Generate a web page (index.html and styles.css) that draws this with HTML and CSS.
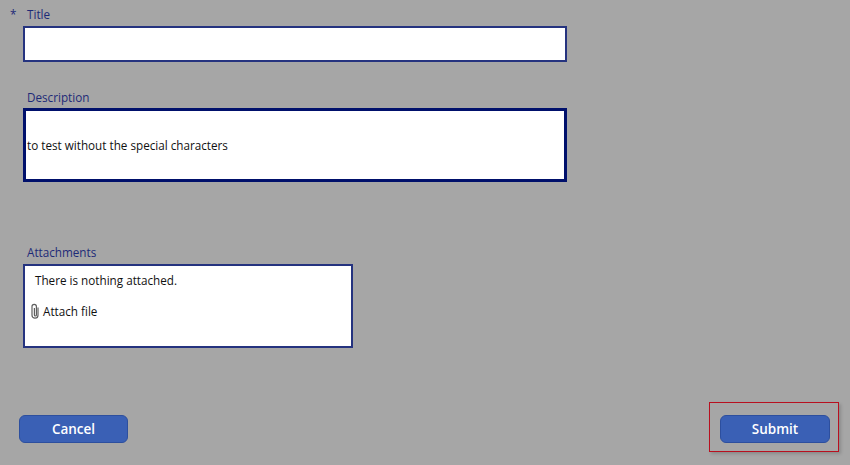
FILE: index.html
```html
<!DOCTYPE html>
<html lang="en">
<head>
<meta charset="utf-8">
<title>Form</title>
<link rel="stylesheet" href="styles.css">
</head>
<body>
<main class="form">
  <section class="field field-title">
    <div class="label-row"><span class="required">*</span><label class="label" for="title">Title</label></div>
    <div class="input input-title" id="title"></div>
  </section>
  <section class="field field-description">
    <div class="label-row"><label class="label">Description</label></div>
    <div class="input input-description">to test without the special characters</div>
  </section>
  <section class="field field-attachments">
    <div class="label-row"><label class="label">Attachments</label></div>
    <div class="input input-attachments">
      <p class="empty">There is nothing attached.</p>
      <div class="attach">
        <svg class="clip" width="10" height="16" viewBox="0 0 10 16" aria-hidden="true"><path d="M8 4.500v7.700a3 3 0 0 1-6 0V3.600a2.200 2.200 0 0 1 4.400 0v8.400a1 1 0 0 1-2 0V5" fill="none" stroke="#5f5f5f" stroke-width="1.200"/></svg>
        <span>Attach file</span>
      </div>
    </div>
  </section>
  <footer class="actions">
    <button class="btn btn-cancel" type="button">Cancel</button>
    <div class="highlight"><button class="btn" type="button">Submit</button></div>
  </footer>
</main>
</body>
</html>
```
FILE: styles.css
```css
* { box-sizing: border-box; }
html, body { margin: 0; height: 100%; }
body {
  background: #a6a6a6;
  font-family: "Open Sans", "Liberation Sans", sans-serif;
  font-size: 11.7px;
  color: #111;
  overflow: hidden;
}
.form {
  display: flex;
  flex-direction: column;
  width: 850px;
  height: 465px;
  padding: 7px 0 0 23px;
}
.label-row {
  position: relative;
  height: 19px;
  padding-left: 4px;
  line-height: 14px;
}
.label { color: #1d2a78; }
.required {
  position: absolute;
  left: -13px;
  top: 0;
  color: #1d2a78;
}
.input {
  background: #fff;
  border: 2px solid #25337f;
}
.input-title { width: 544px; height: 36px; }
.field-description { margin-top: 27px; padding-top: 1px; }
.field-description .label-row { height: 18px; }
.input-description {
  display: flex;
  align-items: center;
  width: 544px;
  height: 74px;
  padding-left: 1px;
  border: 3px solid #00106b;
}
.field-attachments { margin-top: 63px; }
.input-attachments {
  width: 330px;
  height: 84px;
  padding: 5px 0 0 10px;
}
.empty { margin: 0; line-height: 18px; }
.attach {
  display: flex;
  align-items: center;
  gap: 3px;
  margin: 13px 0 0 -5px;
  line-height: 18px;
}
.clip { flex: none; }
.actions {
  display: flex;
  justify-content: space-between;
  align-items: center;
  position: relative;
  width: 811px;
  height: 28px;
  margin: 67px 0 0 -4px;
}
.btn {
  width: 110px;
  height: 28px;
  padding: 0;
  background: #3a60b5;
  border: 1px solid #2d4f9e;
  border-radius: 6px;
  color: #fff;
  font: 600 13.5px "Open Sans", "Liberation Sans", sans-serif;
}
.btn-cancel { width: 109px; }
.highlight { position: relative; }
.highlight::after {
  content: "";
  position: absolute;
  left: -11px;
  top: -13px;
  width: 128px;
  height: 48px;
  border: 1px solid #b8101f;
  box-shadow: 2px 2px 3px rgba(0, 0, 0, 0.16);
  pointer-events: none;
}
```
